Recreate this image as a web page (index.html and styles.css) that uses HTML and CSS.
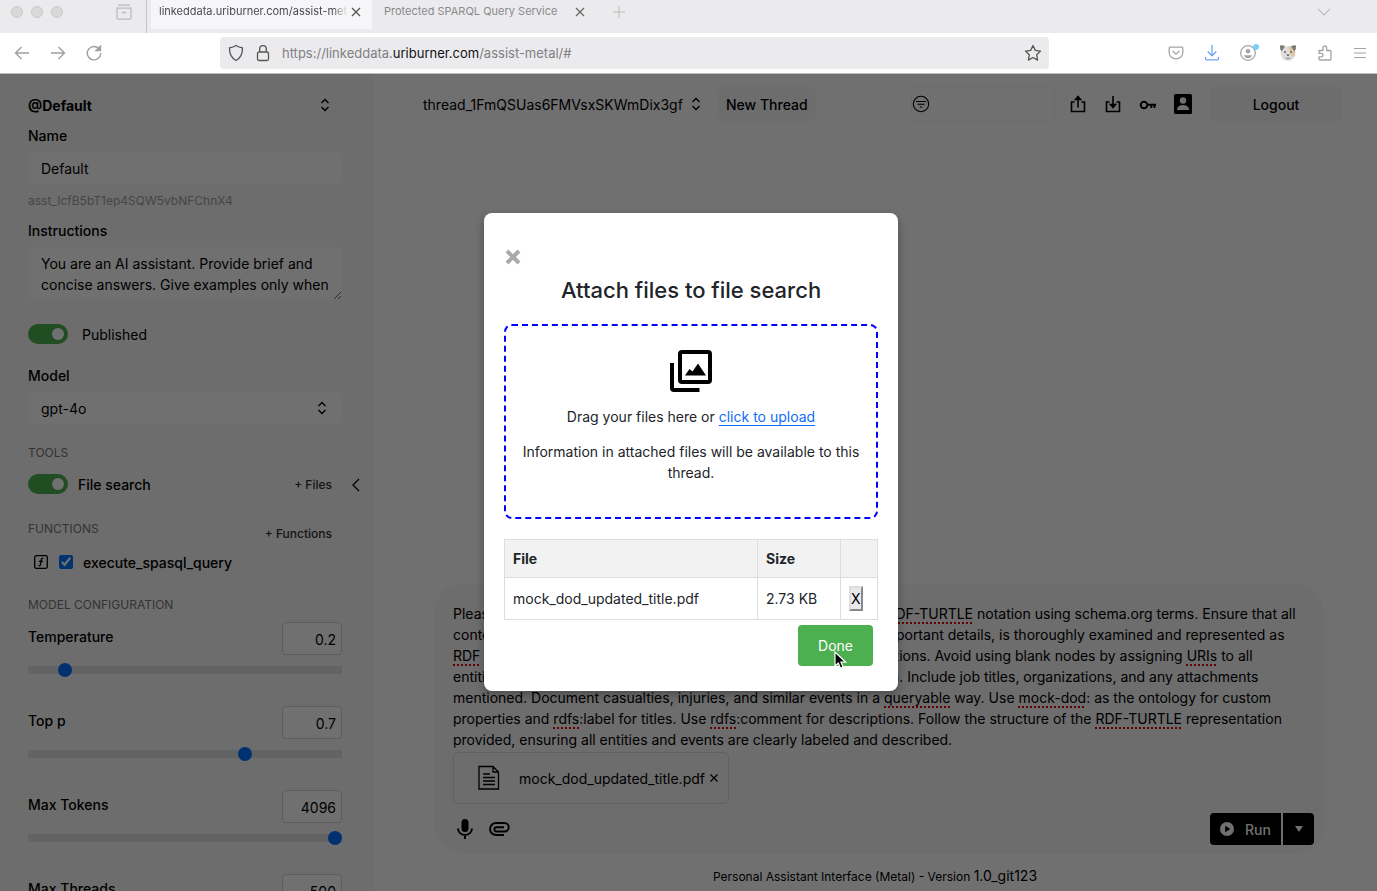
FILE: index.html
```html
<!DOCTYPE html>
<html lang="en">
<head>
    <meta charset="UTF-8">
    <meta name="viewport" content="width=device-width, initial-scale=1.0">
    <title>Personal Assistant Interface</title>
    <link rel="stylesheet" href="styles.css">
</head>
<body>

    <!-- browser window -->
    <div class="tabbar">
        <div class="lights"><span></span><span></span><span></span></div>
        <svg class="archive" width="18" height="18" viewBox="0 0 18 18" fill="none" stroke="#bcbcbe" stroke-width="1.3"><path d="M3 2.2h12M2 5.2h14v10a1 1 0 0 1-1 1H3a1 1 0 0 1-1-1zM7 9.5h4"/></svg>
        <div class="tab active">
            <span class="tab-title">linkeddata.uriburner.com/assist-met</span>
            <button class="tab-close" aria-label="Close tab"><svg width="10" height="10" viewBox="0 0 10 10" stroke="#555" stroke-width="1.3"><path d="M1 1l8 8M9 1l-8 8"/></svg></button>
        </div>
        <div class="tab">
            <span class="tab-title">Protected SPARQL Query Service</span>
            <button class="tab-close" aria-label="Close tab"><svg width="10" height="10" viewBox="0 0 10 10" stroke="#666" stroke-width="1.2"><path d="M1 1l8 8M9 1l-8 8"/></svg></button>
        </div>
        <button class="tab-new" aria-label="New tab"><svg width="12" height="12" viewBox="0 0 12 12" stroke="#bbb" stroke-width="1"><path d="M6 0v12M0 6h12"/></svg></button>
        <button class="tab-list" aria-label="List tabs"><svg width="12" height="8" viewBox="0 0 12 8" fill="none" stroke="#bbb" stroke-width="1.2"><path d="M0 1l6 6 6-6"/></svg></button>
    </div>

    <div class="toolbar">
        <div class="nav">
            <button aria-label="Back"><svg width="16" height="16" viewBox="0 0 16 16" fill="none" stroke="#a0a0a2" stroke-width="1.4"><path d="M15 8H1.5M7.5 2L1.5 8l6 6"/></svg></button>
            <button aria-label="Forward"><svg width="16" height="16" viewBox="0 0 16 16" fill="none" stroke="#a0a0a2" stroke-width="1.4"><path d="M1 8h13.5M8.5 2l6 6-6 6"/></svg></button>
            <button aria-label="Reload"><svg width="16" height="16" viewBox="0 0 16 16" fill="none" stroke="#a0a0a2" stroke-width="1.4"><path d="M13.6 4.5A6.7 6.7 0 1 0 14.7 8"/><path d="M14.5 1v4.5H10z" fill="#a0a0a2"/></svg></button>
        </div>
        <div class="urlbar">
            <svg width="16" height="18" viewBox="0 0 16 18" fill="none" stroke="#555" stroke-width="1.3"><path d="M8 1.5c2 1.4 4.2 2 6.5 2.3.2 5.600-1.500 10-6.500 12.700C3 13.800 1.300 9.400 1.500 3.800 3.800 3.500 6 2.900 8 1.500z"/></svg>
            <svg width="14" height="18" viewBox="0 0 14 18" fill="none" stroke="#555" stroke-width="1.3"><rect x="1.5" y="8" width="11" height="8.5" rx="1.5"/><path d="M3.700 8V5a3.300 3.300 0 0 1 6.600 0v3"/></svg>
            <div class="url">https://linkeddata.<b>uriburner.com</b>/assist-metal/#</div>
            <button aria-label="Bookmark"><svg width="18" height="18" viewBox="0 0 18 18" fill="none" stroke="#555" stroke-width="1.3" stroke-linejoin="round"><path d="M9 1.500l2.300 4.900 5.200.7-3.800 3.700.9 5.300L9 13.500l-4.600 2.600.9-5.300L1.500 7.100l5.200-.7z"/></svg></button>
        </div>
        <div class="extensions">
            <svg width="16" height="16" viewBox="0 0 16 16" fill="none" stroke="#a4a4a8" stroke-width="1.3"><path d="M2 2.200h12c.5 0 .8.300.8.800v4.500a6.800 6.300 0 0 1-13.600 0V3c0-.5.3-.8.8-.8z"/><path d="M4.500 6L8 9.200 11.500 6"/></svg>
            <svg width="16" height="16" viewBox="0 0 16 16" fill="none" stroke="#72a3ee" stroke-width="1.3"><path d="M8 0v10.500M3.700 6.500L8 10.800l4.300-4.300M1.500 12v1.500q0 1.300 1.300 1.300h10.400q1.300 0 1.300-1.300V12"/></svg>
            <svg width="20" height="18" viewBox="0 0 20 18"><circle cx="8" cy="9" r="7.300" fill="none" stroke="#a4a4a8" stroke-width="1.3"/><circle cx="8" cy="7.200" r="2.300" fill="#a4a4a8"/><path d="M3.800 11.200h8.400q-1 3-4.200 3t-4.200-3z" fill="#a4a4a8"/><circle cx="16" cy="3" r="3" fill="#78cffa"/></svg>
            <svg width="18" height="18" viewBox="0 0 18 18"><path d="M2.500 4Q9 0 15.500 4q1.500 5 0 8.500Q13.500 17 9 17t-6.500-4.500Q1 9 2.500 4z" fill="#e0dfde"/><path d="M9.500 2.200Q13 2.200 15.500 4q1.500 5 0 8.500-3 .5-4.500-2.500z" fill="#dfc6a2"/><path d="M1 1.500Q4 .5 6 2.500L2.500 7.500Q.5 5 1 1.500zM17 1.500Q14 .5 12 2.500l3.500 5Q17.500 5 17 1.500z" fill="#7a7a7a"/><circle cx="6" cy="8" r="1" fill="#666"/><circle cx="12" cy="8" r="1" fill="#666"/><path d="M7.300 10.500h3.400L9 12.500z" fill="#555"/><path d="M6.500 14q2.500 1.500 5 0" stroke="#888" fill="none"/></svg>
            <svg width="16" height="16" viewBox="0 0 16 16" fill="none" stroke="#a4a4a8" stroke-width="1.3" stroke-linejoin="round"><path d="M2 5.500h4V3q0-2 1.800-2t1.800 2v2.500h3.200q1.200 0 1.200 1.200v7.100q0 1.200-1.200 1.200H3.200Q2 15 2 13.800v-2h2q2 0 2-1.800T4 8.300H2z"/></svg>
            <svg width="14" height="12" viewBox="0 0 14 12" stroke="#a4a4a8" stroke-width="1.2"><path d="M1 1.500h12M1 6h12M1 10.500h12"/></svg>
        </div>
    </div>

    <div class="app">
        <aside class="sidebar">
            <div class="settings">
                <select class="assistant" aria-label="Assistant"><option>@Default</option></select>

                <label class="label" for="name">Name</label>
                <input class="field" type="text" id="name" value="Default">
                <div class="asst-id">asst_IcfB5bT1ep4SQW5vbNFChnX4</div>

                <label class="label" for="instructions">Instructions</label>
                <textarea class="field" id="instructions">You are an AI assistant. Provide brief and concise answers. Give examples only when specifically requested. Always follow these instructions.</textarea>

                <div class="toggle-row published">
                    <input class="switch" type="checkbox" id="published" checked>
                    <label for="published">Published</label>
                </div>

                <label class="label" for="model">Model</label>
                <select class="field model" id="model"><option>gpt-4o</option></select>

                <div class="section">TOOLS</div>
                <div class="toggle-row tools">
                    <input class="switch" type="checkbox" id="fileSearch" checked>
                    <label for="fileSearch">File search</label>
                    <button class="add">+ Files</button>
                </div>

                <div class="functions">
                    <div class="section-name">FUNCTIONS</div>
                    <button class="add">+ Functions</button>
                </div>
                <div class="function-row">
                    <svg width="14" height="14" viewBox="0 0 14 14" fill="none" stroke="#000" stroke-width="1.3"><rect x=".7" y=".7" width="12.6" height="12.6" rx="1.5"/><path d="M9.500 3.500Q7.500 2.800 7.200 5L6.500 9.500q-.3 1.700-2 1M5 6.300h4"/></svg>
                    <input type="checkbox" id="fn" checked>
                    <label for="fn">execute_spasql_query</label>
                </div>

                <div class="section">MODEL CONFIGURATION</div>
                <div class="param">
                    <label for="temperature">Temperature</label>
                    <input class="number" type="text" value="0.2" aria-label="Temperature value">
                    <input class="range" type="range" id="temperature" min="0" max="2" step="0.1" value="0.2">
                </div>
                <div class="param">
                    <label for="topp">Top p</label>
                    <input class="number" type="text" value="0.7" aria-label="Top p value">
                    <input class="range" type="range" id="topp" min="0" max="1" step="0.1" value="0.7">
                </div>
                <div class="param">
                    <label for="tokens">Max Tokens</label>
                    <input class="number" type="text" value="4096" aria-label="Max Tokens value">
                    <input class="range" type="range" id="tokens" min="1" max="4096" value="4096">
                </div>
                <div class="param">
                    <label for="threads">Max Threads</label>
                    <input class="number" type="text" value="500" aria-label="Max Threads value">
                    <input class="range" type="range" id="threads" min="1" max="500" value="500">
                </div>
            </div>
            <button class="collapse" aria-label="Collapse sidebar"><svg width="8" height="14" viewBox="0 0 8 14" fill="none" stroke="#000" stroke-width="1.3"><path d="M7 1L1 7l6 6"/></svg></button>
        </aside>

        <main class="main">
            <header class="header">
                <select class="thread" aria-label="Thread"><option>thread_1FmQSUas6FMVsxSKWmDix3gf</option></select>
                <button class="btn">New Thread</button>
                <div class="filter">
                    <svg width="18" height="18" viewBox="0 0 18 18" fill="none" stroke="#000" stroke-width="1.1"><circle cx="9" cy="9" r="7.700"/><path d="M4 6.500h10M5.500 9.300h7M7.800 12h2.400"/></svg>
                    <input type="text" aria-label="Filter">
                </div>
                <div class="actions">
                    <button aria-label="Share"><svg width="18" height="18" viewBox="0 0 18 18" fill="none" stroke="#000" stroke-width="1.6"><path d="M5.500 7h-3v9.500h13V7h-3M9 12.500V3"/><path d="M6.500 4.500L9 1.500l2.500 3z" fill="#000"/></svg></button>
                    <button aria-label="Import"><svg width="18" height="18" viewBox="0 0 18 18" fill="none" stroke="#000" stroke-width="1.6"><path d="M5.500 7h-3v9.500h13V7h-3M9 1v9"/><path d="M6.500 9.500L9 12.500l2.500-3z" fill="#000"/></svg></button>
                    <button aria-label="API key"><svg width="18" height="18" viewBox="0 0 18 18" fill="none" stroke="#000" stroke-width="1.9"><circle cx="5" cy="10" r="3.300"/><path d="M8.300 9.700H17M12.300 10v3M15.500 10v3"/></svg></button>
                    <button aria-label="Profile"><svg width="18" height="20" viewBox="0 0 18 20"><rect width="18" height="20" rx="1.5" fill="#000"/><circle cx="9" cy="6.500" r="3.200" fill="#fff"/><path d="M3 16v-1.500q1.500-3.500 6-3.500t6 3.500V16z" fill="#fff"/></svg></button>
                </div>
                <button class="btn logout">Logout</button>
            </header>

            <section class="composer">
                <div class="prompt" contenteditable="true" spellcheck="false" role="textbox" aria-label="Message">Please generate a comprehensive knowledge graph from a file in <u>RDF-TURTLE</u> notation using schema.org terms. Ensure that all<br>content in the document, including each of the key sections and important details, is thoroughly examined and represented as<br><u>RDF</u> statements, covering the people, places, dates and event mentions. Avoid using blank nodes by assigning <u>URIs</u> to all<br>entities, based on the source document URL where they come from. Include job titles, organizations, and any attachments<br>mentioned. Document casualties, injuries, and similar events in a <u>queryable</u> way. Use <u>mock-dod</u>: as the ontology for custom<br>properties and <u>rdfs</u>:label for titles. Use <u>rdfs</u>:comment for descriptions. Follow the structure of the <u>RDF-TURTLE</u> representation<br>provided, ensuring all entities and events are clearly labeled and described.</div>
                <div class="attachment">
                    <svg width="22" height="26" viewBox="0 0 22 26" fill="none" stroke="#000" stroke-width="1.3"><path d="M1 1.500h14l5.500 5.500v17H1zM15 1.500V7h5.500M5 9h7M5 12.500h12M5 16h12M5 19.500h12"/></svg>
                    <span>mock_dod_updated_title.pdf</span>
                    <button aria-label="Remove attachment"><svg width="8" height="8" viewBox="0 0 8 8" stroke="#000" stroke-width="1.2"><path d="M.5.5l7 7M7.500.5l-7 7"/></svg></button>
                </div>
                <div class="composer-bar">
                    <button aria-label="Record"><svg width="18" height="22" viewBox="0 0 18 22"><rect x="5.500" y="1" width="7" height="13" rx="3.500" fill="#000"/><path d="M2 10.500a7 6.500 0 0 0 14 0M9 17v4" fill="none" stroke="#000" stroke-width="1.9"/></svg></button>
                    <button aria-label="Attach"><svg width="22" height="16" viewBox="0 0 22 16" fill="none" stroke="#000" stroke-width="1.9"><path d="M16 14H8A6 6 0 0 1 8 2h8.500a4 4 0 0 1 0 8.500H8.500a2.100 2.100 0 0 1 0-4.300H16"/></svg></button>
                    <div class="run">
                        <button class="run-main"><svg width="14" height="14" viewBox="0 0 14 14"><circle cx="7" cy="7" r="7" fill="#fff"/><path d="M5.200 3.700v6.600L10.200 7z" fill="#000"/></svg>Run</button>
                        <button class="run-more" aria-label="Run options"><svg width="10" height="8" viewBox="0 0 10 8"><path d="M1 1h8L5 7z" fill="#fff"/></svg></button>
                    </div>
                </div>
            </section>

            <footer class="footer">Personal Assistant Interface (Metal) - Version <span>1.0_git123</span></footer>
        </main>

        <div class="overlay">
            <div class="modal" role="dialog" aria-labelledby="modalTitle">
                <button class="close" aria-label="Close"><svg width="16" height="16" viewBox="0 0 16 16" stroke="#aaa" stroke-width="4"><path d="M2 2l12 12M14 2L2 14"/></svg></button>
                <h2 id="modalTitle">Attach files to file search</h2>
                <div class="dropzone">
                    <svg width="42" height="42" viewBox="0 0 42 42" fill="none" stroke="#000" stroke-width="4"><rect x="10" y="2" width="30" height="30" rx="2"/><path d="M2 13v25q0 2 2 2h25.500"/><path d="M15 25.500l4.500-6.500 3 2.500 5.500-8 8 12z" fill="#000" stroke="none"/></svg>
                    <p>Drag your files here or <a href="#">click to upload</a></p>
                    <p>Information in attached files will be available to this thread.</p>
                </div>
                <table class="files">
                    <thead>
                        <tr><th class="col-file">File</th><th class="col-size">Size</th><th></th></tr>
                    </thead>
                    <tbody>
                        <tr><td>mock_dod_updated_title.pdf</td><td>2.73 KB</td><td><button class="remove">X</button></td></tr>
                    </tbody>
                </table>
                <button class="done">Done
                    <svg class="pointer" width="14" height="19" viewBox="0 0 14 19"><path d="M1 1v14l3.300-3 2.200 5.300 2.600-1.100L7 11.200h4.700z" fill="#000" stroke="#fff" stroke-width="1.2"/></svg>
                </button>
            </div>
        </div>
    </div>

</body>
</html>
```

FILE: styles.css
```css
* {
    box-sizing: border-box;
}
body {
    margin: 0;
    height: 100vh;
    display: flex;
    flex-direction: column;
    overflow: hidden;
    font-family: Inter, "Liberation Sans", sans-serif;
    font-size: 14px;
    line-height: 21px;
    color: #000;
    background: #fff;
}
button, input, select, textarea {
    font: inherit;
    color: inherit;
    margin: 0;
}
button {
    padding: 0;
    border: 0;
    background: none;
    cursor: pointer;
}
svg {
    display: block;
    flex: none;
}

/* browser window */
.tabbar {
    display: flex;
    align-items: center;
    height: 33px;
    padding-bottom: 10px;
    flex: none;
    background: #ebebed;
    font-size: 11px;
    color: #8a8a8c;
}
.lights {
    display: flex;
    gap: 8px;
    padding-left: 11px;
}
.lights span {
    width: 12px;
    height: 12px;
    border-radius: 50%;
    border: 1px solid #c8c8c8;
    background: #d9d9d9;
}
.archive {
    margin-left: 52px;
}
.tab {
    display: flex;
    align-items: center;
    gap: 18px;
    padding: 0 10px 0 12px;
}
.tab .tab-title {
    white-space: nowrap;
}
.tab.active {
    align-self: flex-start;
    gap: 3px;
    width: 226px;
    height: 33px;
    margin: 0 0 -10px 13px;
    padding: 0 11px 10px 12px;
    border-left: 1px solid #c4c4c6;
    background: linear-gradient(#f6f6f8, #f6f6f8) 4px 0 / 221px 29px no-repeat;
    color: #4c4c4e;
}
.tab.active .tab-title {
    flex: 1;
    mask-image: linear-gradient(to right, #000 92%, transparent);
}
.tab-new {
    margin-left: 18px;
}
.tab-list {
    margin: 0 47px 0 auto;
}
.toolbar {
    display: flex;
    align-items: center;
    height: 40px;
    flex: none;
}
.nav {
    display: flex;
    gap: 20px;
    width: 220px;
    padding-left: 14px;
}
.urlbar {
    display: flex;
    align-items: center;
    gap: 12px;
    flex: 1;
    height: 32px;
    padding: 0 7px 0 8px;
    border-radius: 4px;
    background: #ebebed;
}
.url {
    flex: 1;
    font-size: 13px;
    color: #808082;
}
.url b {
    font-weight: 400;
    color: #111;
}
.extensions {
    display: flex;
    align-items: center;
    justify-content: space-between;
    width: 328px;
    padding: 0 10px 0 119px;
}

/* page */
.app {
    position: relative;
    display: flex;
    flex: 1;
    min-height: 0;
    overflow: hidden;
    border-top: 1px solid #bbb;
}
.sidebar {
    display: flex;
    flex: none;
    width: 373px;
    background: #f7f7f7;
}
.settings {
    display: flex;
    flex-direction: column;
    width: 342px;
    padding: 15px 0 0 28px;
    overflow: hidden;
    font-weight: 500;
}
.settings > * {
    flex-shrink: 0;
}
.collapse {
    align-self: center;
    padding: 4px 10px 0;
}
select {
    appearance: none;
    border: 0;
    background: url("data:image/svg+xml,%3Csvg xmlns='http://www.w3.org/2000/svg' width='10' height='14' fill='none' stroke='%23000' stroke-width='1.4'%3E%3Cpath d='M1.500 5L5 1.500 8.500 5M1.500 9L5 12.500 8.500 9'/%3E%3C/svg%3E") right 12px center no-repeat;
}
.assistant {
    height: 32px;
    padding: 0;
    font-weight: 700;
}
.label {
    margin: 4px 0 6px;
}
.field {
    height: 32px;
    padding: 0 13px;
    border: 0;
    border-radius: 6px;
    background-color: #fff;
    font-weight: 400;
}
.field.model {
    background-position: right 15px center;
}
textarea.field {
    height: 53px;
    padding-top: 6px;
    resize: vertical;
    overflow: hidden;
}
.asst-id {
    margin: 6px 0 5px;
    font-size: 12px;
    font-weight: 400;
    color: #a0a0a0;
}
.toggle-row {
    display: flex;
    align-items: center;
    height: 20px;
}
.published {
    margin: 24px 0 17px;
    gap: 14px;
    font-weight: 400;
}
.tools {
    gap: 10px;
    margin-bottom: 24px;
}
.switch {
    appearance: none;
    display: flex;
    align-items: center;
    justify-content: flex-end;
    width: 40px;
    height: 20px;
    padding: 0 4px;
    border-radius: 10px;
    background: #4caf50;
}
.switch::before {
    content: "";
    width: 12px;
    height: 12px;
    border-radius: 50%;
    background: #fff;
}
.add {
    margin-left: auto;
    padding-right: 10px;
    font-size: 12px;
    font-weight: 500;
    color: #333;
}
.section, .section-name {
    font-size: 12px;
    font-weight: 400;
    color: #777;
}
.section {
    margin: 18px 0 11px;
}
.functions {
    display: flex;
    height: 26px;
}
.functions .add {
    align-self: flex-end;
}
.function-row {
    display: flex;
    align-items: center;
    height: 20px;
    margin-top: 8px;
    padding-left: 6px;
}
.function-row input {
    width: 14px;
    height: 14px;
    margin: 0 10px 0 11px;
    accent-color: #0075ff;
}
.function-row + .section {
    margin: 22px 0 7px;
}
.param {
    display: grid;
    grid-template-columns: 1fr 60px;
    grid-template-rows: 41px 14px;
    align-items: start;
    height: 84px;
}
.param label {
    padding-top: 4px;
}
.number {
    width: 60px;
    height: 33px;
    padding: 1px 5px 0;
    border: 1px solid #ced4da;
    border-radius: 4px;
    background: #fff;
    font-weight: 400;
    text-align: right;
}
.range {
    appearance: none;
    grid-column: 1 / 3;
    width: 100%;
    height: 14px;
    background: linear-gradient(#dee2e6, #dee2e6) center / 100% 8px no-repeat;
    border-radius: 4px;
}
.range::-webkit-slider-thumb {
    appearance: none;
    width: 14px;
    height: 14px;
    border-radius: 50%;
    background: #0070ff;
}

.main {
    display: flex;
    flex-direction: column;
    flex: 1;
    min-width: 0;
}
.header {
    display: flex;
    align-items: center;
    padding: 11px 34px 0 50px;
}
.thread {
    width: 282px;
    padding: 0;
    background-position: right 4px center;
}
.btn {
    height: 38px;
    padding: 0 8px;
    border-radius: 10px;
    background: #f7f7f7;
    font-weight: 500;
}
.header .btn {
    margin-left: 13px;
}
.header .logout {
    width: 134px;
    margin-left: 17px;
}
.filter {
    display: flex;
    align-items: center;
    width: 144px;
    height: 36px;
    margin-left: auto;
    border: 1px solid #f4f4f4;
    border-radius: 8px;
}
.filter input {
    width: 100%;
    border: 0;
    background: none;
}
.actions {
    display: flex;
    align-items: center;
    gap: 17px;
    margin-left: 14px;
}
.composer {
    margin: auto 53px 0 61px;
    padding: 20px 10px 9px 19px;
    border-radius: 30px;
    background: #f7f7f7;
}
.prompt {
    white-space: nowrap;
    outline: none;
}
.prompt u {
    text-decoration: underline dotted #d00;
    text-decoration-thickness: 2px;
    text-underline-offset: 3px;
}
.attachment {
    display: flex;
    align-items: center;
    width: fit-content;
    height: 52px;
    margin-top: 2px;
    padding: 0 10px 0 24px;
    border: 1px solid #ddd;
    border-radius: 5px;
}
.attachment span {
    margin: 0 5px 0 19px;
}
.composer-bar {
    display: flex;
    align-items: center;
    gap: 14px;
    margin-top: 9px;
    padding-left: 3px;
}
.run {
    display: flex;
    gap: 2px;
    margin-left: auto;
    color: #fff;
    font-weight: 500;
}
.run button {
    display: flex;
    align-items: center;
    justify-content: center;
    height: 32px;
    background: #000;
}
.run-main {
    width: 71px;
    gap: 11px;
    border-radius: 4px 0 0 4px;
}
.run-more {
    width: 31px;
    border-radius: 0 4px 4px 0;
}
.footer {
    padding: 11px 0 4px;
    text-align: center;
    font-size: 12px;
}
.footer span {
    font-size: 14px;
}

/* file dialog */
.overlay {
    position: absolute;
    inset: 0;
    display: flex;
    align-items: flex-start;
    justify-content: center;
    padding: 139px 0 0 5px;
    background: rgba(0, 0, 0, 0.56);
}
.modal {
    display: flex;
    flex-direction: column;
    width: 414px;
    padding: 36px 20px 25px;
    border-radius: 8px;
    background: #fff;
    color: #212529;
    box-shadow: 0 4px 10px rgba(0, 0, 0, 0.3);
}
.close {
    align-self: flex-start;
    padding: 0 1px;
}
.modal h2 {
    margin: 11px 0 19px;
    font-size: 22px;
    font-weight: 500;
    line-height: 29px;
    text-align: center;
}
.dropzone {
    display: flex;
    flex-direction: column;
    align-items: center;
    padding: 24px 12px 34px;
    border: 2px dashed #00f;
    border-radius: 8px;
    text-align: center;
}
.dropzone p {
    margin: 0;
}
.dropzone p:first-of-type {
    margin: 14px 0;
}
.dropzone a {
    color: #0d6efd;
    text-underline-offset: 3px;
}
.files {
    width: 100%;
    margin: 20px 0 5px;
    border-collapse: collapse;
    table-layout: fixed;
}
.files th, .files td {
    padding: 8px;
    border: 1px solid #ddd;
    text-align: left;
}
.files th {
    height: 38px;
    background: #f2f2f2;
}
.files td {
    height: 42px;
}
.col-file {
    width: 253px;
}
.col-size {
    width: 83px;
}
.remove {
    display: block;
    height: 25px;
    border: 2px outset #ddd;
    background: #e9e9ed;
    color: #000;
}
.done {
    position: relative;
    align-self: flex-end;
    height: 41px;
    margin-right: 5px;
    padding: 0 20px;
    border-radius: 4px;
    background: #4caf50;
    color: #fff;
}
.pointer {
    position: absolute;
    left: 36px;
    top: 26px;
}
```
